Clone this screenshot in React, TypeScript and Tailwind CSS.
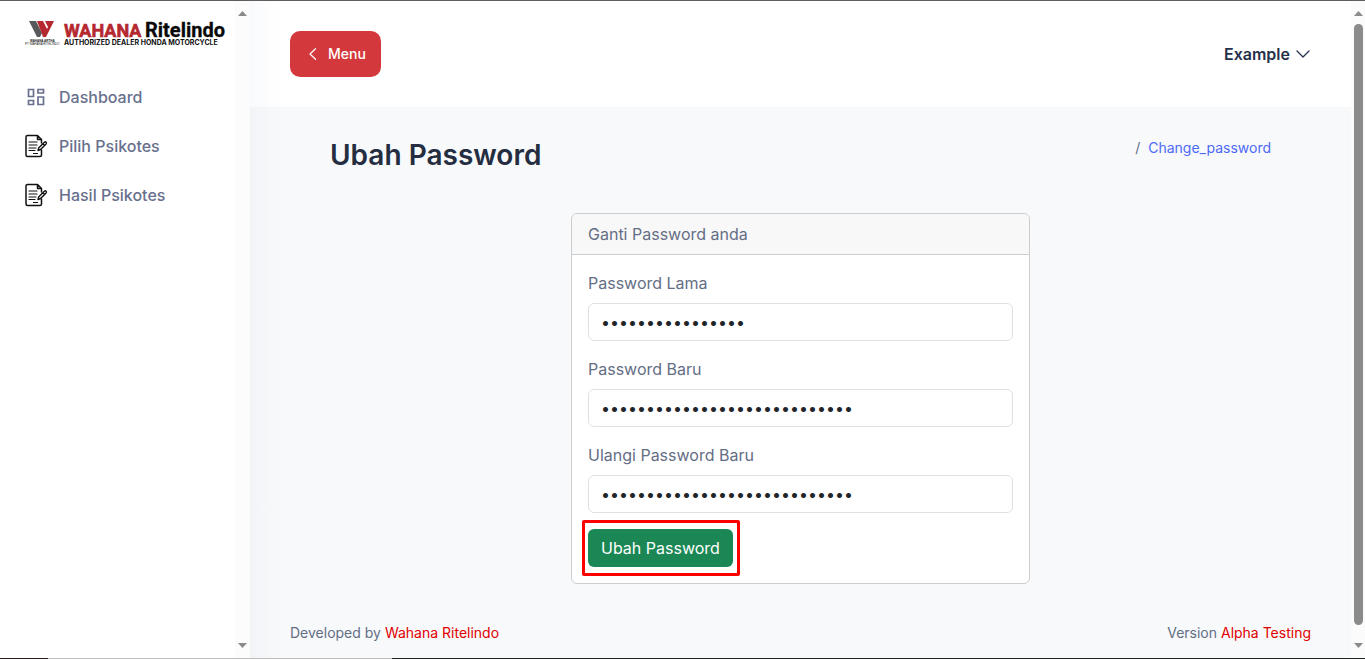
import React from "react";

function Logo() {
  return (
    <a href="#" aria-label="Wahana Ritelindo" className="block w-[202px]">
      <svg viewBox="0 0 202 30" className="block h-[30px] w-full">
        <path d="M5 4h7l6 12-2 4h-3z" fill="#58595b" />
        <path d="M13 4h6l4 8 1-2-3-6h9l-8 16h-3l-1-3z" fill="#b5282f" />
        <text x="6" y="25" fontSize="3" fontWeight="700" fill="#222" fontFamily="Liberation Sans, sans-serif">WAHANA ARTHA</text>
        <text x="1" y="28" fontSize="3" fill="#222" fontFamily="Liberation Sans, sans-serif">PT WAHANA RITELINDO</text>
        <text x="40" y="20" fontSize="18" fontWeight="700" fill="#b5282f" stroke="#b5282f" strokeWidth="0.6" fontFamily="Roboto, sans-serif">WAHANA</text>
        <text x="121" y="20" fontSize="20" fontWeight="700" fill="#090909" stroke="#090909" strokeWidth="0.3" fontFamily="Roboto, sans-serif">Ritelindo</text>
        <text x="40" y="28" fontSize="7" fontWeight="700" fill="#111" fontFamily="Inter, sans-serif">AUTHORIZED DEALER HONDA MOTORCYCLE</text>
      </svg>
    </a>
  );
}

function DashboardIcon() {
  return (
    <svg viewBox="0 0 24 24" className="h-6 w-6" fill="none" stroke="#68708d" strokeWidth="1.700">
      <path d="M4.500 4.500h5v7h-5zM14 4.500h5.500v3.500h-5.500zM14 12h5.500v7.500h-5.500zM4.500 15.500h5v4h-5z" />
    </svg>
  );
}

function TestIcon() {
  return (
    <svg viewBox="0 0 24 24" className="h-6 w-6" fill="none" stroke="#111" strokeWidth="1.500" strokeLinejoin="round" strokeLinecap="round">
      <path d="M17.500 16v5q0 1.500-1.500 1.500H3.500Q2 22.500 2 21V3q0-1.500 1.500-1.500H13.500L17.500 5.500V9M13.500 1.500v4h4" />
      <path d="M5 8h8M5 11h8M5 14h7M5 16.500h6M9.500 19.500h4" strokeWidth="1.200" />
      <path d="M14 16.500l.8-2.800 5.600-5.500q1-.8 1.700 0t0 1.700l-5.500 5.600zM18.800 9.800l1.600 1.600" fill="#fff" strokeWidth="1.400" />
    </svg>
  );
}

function ScrollArrow({ down = false }: { down?: boolean }) {
  return (
    <svg viewBox="0 0 9 5" className="h-[5px] w-[9px] shrink-0" fill="#8b8b8b">
      <path d={down ? "M0 0h9L4.500 5z" : "M0 5h9L4.500 0z"} />
    </svg>
  );
}

const links = [
  { label: "Dashboard", icon: <DashboardIcon /> },
  { label: "Pilih Psikotes", icon: <TestIcon /> },
  { label: "Hasil Psikotes", icon: <TestIcon /> },
];

const fields = [
  { id: "old-password", label: "Password Lama", value: "x".repeat(16) },
  { id: "new-password", label: "Password Baru", value: "x".repeat(28) },
  { id: "repeat-password", label: "Ulangi Password Baru", value: "x".repeat(28) },
];

function Sidebar() {
  return (
    <aside className="flex w-[250px] shrink-0 bg-white">
      <div className="min-w-0 flex-1 pt-4 pl-6">
        <Logo />
        <nav className="mt-[38px] flex flex-col gap-[25px]">
          {links.map((link) => (
            <a key={link.label} href="#" className="flex items-center gap-[11px] font-medium text-[#68708d]">
              {link.icon}
              {link.label}
            </a>
          ))}
        </nav>
      </div>
      <div className="flex w-[15px] flex-col items-center justify-between bg-[#fcfcfc] py-[10px]">
        <ScrollArrow />
        <ScrollArrow down />
      </div>
    </aside>
  );
}

function PasswordCard() {
  return (
    <form onSubmit={(e) => e.preventDefault()} className="mx-auto w-full max-w-[459px] rounded-md border border-[#cccdcf] bg-white">
      <h2 className="rounded-t-md border-b border-[#cccdcf] bg-[#f8f8f8] px-4 py-2">Ganti Password anda</h2>
      <div className="flex flex-col items-start gap-4 p-4">
        {fields.map((field) => (
          <div key={field.id} className="flex w-full flex-col gap-2">
            <label htmlFor={field.id}>{field.label}</label>
            <input
              id={field.id}
              type="password"
              defaultValue={field.value}
              className="h-[38px] w-full rounded-md border border-[#dee2e6] bg-white px-3 text-[#212529]"
            />
          </div>
        ))}
        <div className="relative">
          <button type="submit" className="block h-[38px] rounded-md bg-[#1a8754] px-[13px] text-white">
            Ubah Password
          </button>
          <div className="pointer-events-none absolute -inset-y-[9px] -right-[7px] -left-[6px] rounded-xs border-3 border-[#fe0000]" />
        </div>
      </div>
    </form>
  );
}

export default function App() {
  return (
    <div className="flex min-h-screen flex-col border-t border-[#5f5d5f] bg-[#f7f9fb] font-['Inter','Liberation_Sans',sans-serif] text-base text-[#646e85]">
      <div className="flex flex-1">
        <Sidebar />
        <div className="flex min-w-0 flex-1 flex-col bg-linear-to-r from-[#f2f4f7] to-[#f7f9fb] to-[32px]">
          <header className="flex items-center justify-between bg-linear-to-r from-[#f9fafc] to-white to-[32px] px-10 py-[30px]">
            <button type="button" className="flex h-[46px] items-center gap-[10px] rounded-[10px] bg-[#d3393c] pr-[15px] pl-[18px] text-sm font-medium text-white">
              <svg viewBox="0 0 10 12" className="h-3 w-[10px]" fill="none" stroke="currentColor" strokeWidth="1.200" strokeLinecap="round" strokeLinejoin="round">
                <path d="M7.500.7L2 6l5.500 5.300" />
              </svg>
              Menu
            </button>
            <button type="button" className="flex items-center gap-[6px] pr-px font-semibold text-[#25304a]">
              Example
              <svg viewBox="0 0 14 8" className="h-2 w-[14px]" fill="none" stroke="currentColor" strokeWidth="1.300" strokeLinecap="round" strokeLinejoin="round">
                <path d="M1 1l6 6 6-6" />
              </svg>
            </button>
          </header>
          <main className="px-10 pt-[30px]">
            <div className="mb-10 flex items-start justify-between px-10">
              <h1 className="text-[28px] leading-9 font-semibold text-[#252d40]">Ubah Password</h1>
              <nav aria-label="Breadcrumb" className="flex gap-2 text-sm leading-[22px]">
                <span>/</span>
                <a href="#" className="text-[#4d69f5]">Change_password</a>
              </nav>
            </div>
            <PasswordCard />
          </main>
          <footer className="mt-auto flex justify-between px-10 pt-6 pb-[14px] text-sm leading-[22px]">
            <p>Developed by <a href="#" className="text-[#e00000]">Wahana Ritelindo</a></p>
            <p>Version <span className="text-[#e00000]">Alpha Testing</span></p>
          </footer>
        </div>
        <div className="flex w-[14px] shrink-0 flex-col items-center gap-2 bg-[#fbfbfb] py-[10px]">
          <ScrollArrow />
          <div className="mb-[10px] w-[9px] flex-1 rounded-full bg-[#8b8b8b]" />
          <ScrollArrow down />
        </div>
      </div>
      <div className="flex h-px">
        <div className="w-12 bg-[#2b1c1c]" />
        <div className="w-[344px] bg-[#bdbdbd]" />
        <div className="flex-1 bg-[#22241f]" />
      </div>
    </div>
  );
}
